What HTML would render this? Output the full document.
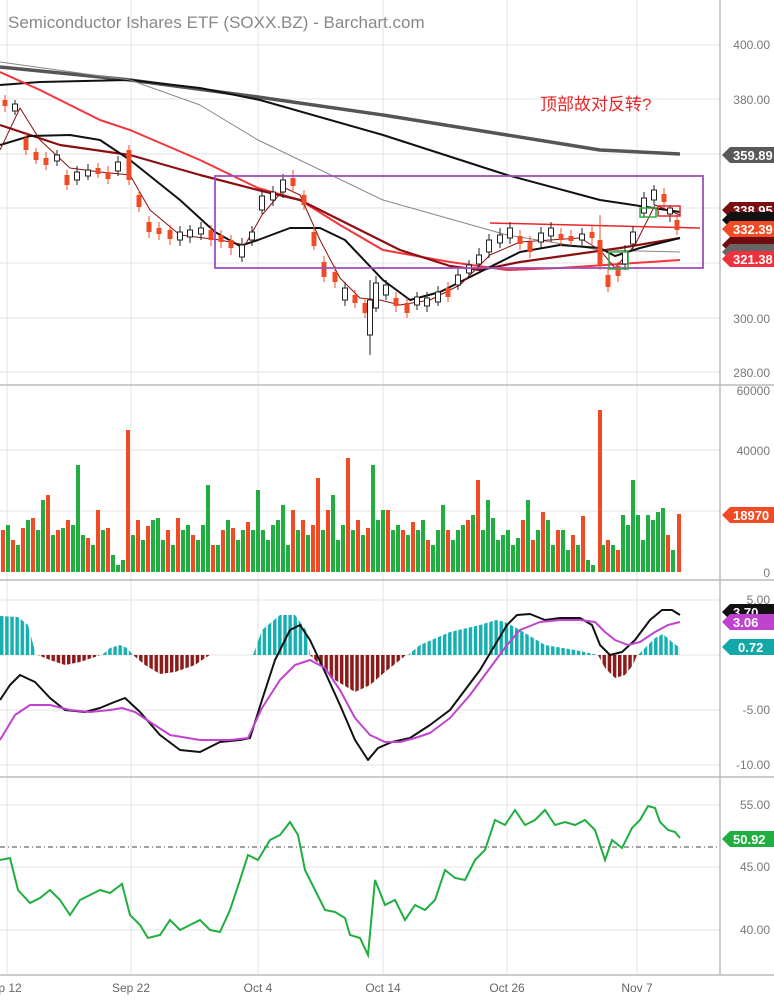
<!DOCTYPE html>
<html><head><meta charset="utf-8"><style>
html,body{margin:0;padding:0;background:#fff;}
svg{display:block;font-family:"Liberation Sans","Noto Sans CJK SC",sans-serif;}
</style></head><body>
<svg width="774" height="1000" viewBox="0 0 774 1000" xmlns="http://www.w3.org/2000/svg">
<defs>
<pattern id="pt" width="5.15" height="10" patternUnits="userSpaceOnUse"><rect width="3.5" height="10" fill="#17b0b0"/></pattern>
<pattern id="pr" width="5.15" height="10" patternUnits="userSpaceOnUse"><rect width="3.5" height="10" fill="#8b1a1a"/></pattern>
</defs>
<rect width="774" height="1000" fill="#fff"/>
<g stroke="#e3e3e3" stroke-width="1">
<line x1="7" y1="0" x2="7" y2="975"/><line x1="131" y1="0" x2="131" y2="975"/><line x1="258" y1="0" x2="258" y2="975"/><line x1="383" y1="0" x2="383" y2="975"/><line x1="507" y1="0" x2="507" y2="975"/><line x1="637" y1="0" x2="637" y2="975"/>
<line x1="0" y1="45" x2="720" y2="45"/><line x1="0" y1="99" x2="720" y2="99"/><line x1="0" y1="154" x2="720" y2="154"/><line x1="0" y1="208" x2="720" y2="208"/><line x1="0" y1="263" x2="720" y2="263"/><line x1="0" y1="318" x2="720" y2="318"/><line x1="0" y1="372" x2="720" y2="372"/>
<line x1="0" y1="450" x2="720" y2="450"/><line x1="0" y1="511" x2="720" y2="511"/>
<line x1="0" y1="600" x2="720" y2="600"/><line x1="0" y1="655" x2="720" y2="655"/><line x1="0" y1="710" x2="720" y2="710"/><line x1="0" y1="765" x2="720" y2="765"/>
<line x1="0" y1="805" x2="720" y2="805"/><line x1="0" y1="867" x2="720" y2="867"/><line x1="0" y1="930" x2="720" y2="930"/>
</g>
<g stroke="#bbb" stroke-width="1.5"><line x1="0" y1="385" x2="774" y2="385"/><line x1="0" y1="580" x2="774" y2="580"/><line x1="0" y1="777" x2="774" y2="777"/><line x1="0" y1="975" x2="774" y2="975"/><line x1="720" y1="0" x2="720" y2="975"/></g>
<text x="8" y="28" font-size="17" fill="#888">Semiconductor Ishares ETF (SOXX.BZ) - Barchart.com</text>
<text x="540" y="110" font-size="17" fill="#e8262a">顶部故对反转?</text>
<g font-size="12" fill="#777" text-anchor="end">
<text x="770" y="49">400.00</text><text x="770" y="104">380.00</text><text x="770" y="323">300.00</text><text x="770" y="377">280.00</text>
<text x="770" y="395">60000</text><text x="770" y="455">40000</text><text x="770" y="577">0</text>
<text x="770" y="604">5.00</text><text x="770" y="714">-5.00</text><text x="770" y="769">-10.00</text>
<text x="770" y="809">55.00</text><text x="770" y="871">45.00</text><text x="770" y="934">40.00</text>
</g>
<g font-size="12" fill="#666" text-anchor="middle">
<text x="10" y="992">p 12</text><text x="131" y="992">Sep 22</text><text x="258" y="992">Oct 4</text><text x="383" y="992">Oct 14</text><text x="507" y="992">Oct 26</text><text x="637" y="992">Nov 7</text>
</g>
<g fill="none" stroke-linejoin="round">
<polyline points="0,67 130,80 258,97 383,115 507,135 600,150 680,154" stroke="#555" stroke-width="3.5"/>
<polyline points="0,85 40,82 130,80 200,88 260,100 383,135 507,175 600,200 680,212" stroke="#111" stroke-width="2"/>
<polyline points="0,62 130,80 200,105 258,140 383,200 507,235 600,250 680,252" stroke="#888" stroke-width="1"/>
<polyline points="0,72 40,90 100,120 130,130 200,160 258,188 300,200 340,225 383,250 450,262 507,270 560,268 620,264 680,260" stroke="#f2353a" stroke-width="2"/>
<polyline points="0,125 60,145 130,155 200,175 258,190 300,200 350,225 400,250 450,266 480,270 520,262 570,255 620,248 680,238" stroke="#8b0e12" stroke-width="2.2"/>
<polyline points="0,145 30,136 70,135 100,140 130,160 180,200 215,232 240,246 258,240 290,228 320,228 345,240 383,280 410,300 440,292 480,272 520,252 560,245 600,248 615,256 640,248 680,238" stroke="#111" stroke-width="2"/>
<polyline points="0,150 20,108 40,140 70,168 100,172 130,175 150,210 180,235 220,240 245,245 262,215 285,188 300,195 320,240 340,278 360,298 380,300 400,305 430,300 460,285 490,255 520,242 550,240 580,238 600,250 615,268 635,245 655,205 680,215" stroke="#8b0e12" stroke-width="1"/>
<line x1="490" y1="223" x2="700" y2="228" stroke="#e8262a" stroke-width="1.5"/>
</g>
<g stroke-width="1">
<line x1="5" y1="95" x2="5" y2="112" stroke="#f04b25"/><rect x="2.5" y="100" width="5" height="6" fill="#f04b25"/>
<line x1="15" y1="100" x2="15" y2="115" stroke="#222"/><rect x="12.5" y="104" width="5" height="7" fill="#fff" stroke="#222"/>
<line x1="26" y1="132" x2="26" y2="155" stroke="#f04b25"/><rect x="23.5" y="138" width="5" height="12" fill="#f04b25"/>
<line x1="36" y1="148" x2="36" y2="164" stroke="#f04b25"/><rect x="33.5" y="152" width="5" height="8" fill="#f04b25"/>
<line x1="46" y1="152" x2="46" y2="170" stroke="#f04b25"/><rect x="43.5" y="158" width="5" height="7" fill="#f04b25"/>
<line x1="57" y1="150" x2="57" y2="166" stroke="#222"/><rect x="54.5" y="155" width="5" height="6" fill="#fff" stroke="#222"/>
<line x1="67" y1="170" x2="67" y2="190" stroke="#f04b25"/><rect x="64.5" y="175" width="5" height="10" fill="#f04b25"/>
<line x1="77" y1="166" x2="77" y2="185" stroke="#222"/><rect x="74.5" y="172" width="5" height="8" fill="#fff" stroke="#222"/>
<line x1="88" y1="164" x2="88" y2="180" stroke="#222"/><rect x="85.5" y="170" width="5" height="6" fill="#fff" stroke="#222"/>
<line x1="98" y1="163" x2="98" y2="178" stroke="#f04b25"/><rect x="95.5" y="168" width="5" height="6" fill="#f04b25"/>
<line x1="108" y1="166" x2="108" y2="184" stroke="#f04b25"/><rect x="105.5" y="172" width="5" height="7" fill="#f04b25"/>
<line x1="118" y1="156" x2="118" y2="176" stroke="#222"/><rect x="115.5" y="162" width="5" height="9" fill="#fff" stroke="#222"/>
<line x1="129" y1="145" x2="129" y2="185" stroke="#f04b25"/><rect x="126.5" y="150" width="5" height="30" fill="#f04b25"/>
<line x1="139" y1="190" x2="139" y2="212" stroke="#f04b25"/><rect x="136.5" y="195" width="5" height="12" fill="#f04b25"/>
<line x1="149" y1="216" x2="149" y2="238" stroke="#f04b25"/><rect x="146.5" y="222" width="5" height="10" fill="#f04b25"/>
<line x1="159" y1="222" x2="159" y2="240" stroke="#f04b25"/><rect x="156.5" y="228" width="5" height="6" fill="#f04b25"/>
<line x1="170" y1="225" x2="170" y2="245" stroke="#f04b25"/><rect x="167.5" y="230" width="5" height="9" fill="#f04b25"/>
<line x1="180" y1="226" x2="180" y2="246" stroke="#222"/><rect x="177.5" y="232" width="5" height="8" fill="#fff" stroke="#222"/>
<line x1="190" y1="225" x2="190" y2="243" stroke="#222"/><rect x="187.5" y="230" width="5" height="7" fill="#fff" stroke="#222"/>
<line x1="201" y1="222" x2="201" y2="240" stroke="#222"/><rect x="198.5" y="228" width="5" height="6" fill="#fff" stroke="#222"/>
<line x1="211" y1="225" x2="211" y2="246" stroke="#f04b25"/><rect x="208.5" y="230" width="5" height="10" fill="#f04b25"/>
<line x1="221" y1="230" x2="221" y2="248" stroke="#f04b25"/><rect x="218.5" y="235" width="5" height="7" fill="#f04b25"/>
<line x1="231" y1="235" x2="231" y2="255" stroke="#f04b25"/><rect x="228.5" y="240" width="5" height="8" fill="#f04b25"/>
<line x1="242" y1="238" x2="242" y2="262" stroke="#222"/><rect x="239.5" y="245" width="5" height="12" fill="#fff" stroke="#222"/>
<line x1="252" y1="226" x2="252" y2="246" stroke="#222"/><rect x="249.5" y="232" width="5" height="8" fill="#fff" stroke="#222"/>
<line x1="262" y1="190" x2="262" y2="214" stroke="#222"/><rect x="259.5" y="196" width="5" height="14" fill="#fff" stroke="#222"/>
<line x1="273" y1="186" x2="273" y2="206" stroke="#222"/><rect x="270.5" y="192" width="5" height="8" fill="#fff" stroke="#222"/>
<line x1="283" y1="174" x2="283" y2="198" stroke="#222"/><rect x="280.5" y="180" width="5" height="12" fill="#fff" stroke="#222"/>
<line x1="293" y1="170" x2="293" y2="192" stroke="#f04b25"/><rect x="290.5" y="178" width="5" height="8" fill="#f04b25"/>
<line x1="304" y1="190" x2="304" y2="210" stroke="#f04b25"/><rect x="301.5" y="195" width="5" height="10" fill="#f04b25"/>
<line x1="314" y1="226" x2="314" y2="250" stroke="#f04b25"/><rect x="311.5" y="232" width="5" height="14" fill="#f04b25"/>
<line x1="324" y1="256" x2="324" y2="282" stroke="#f04b25"/><rect x="321.5" y="262" width="5" height="15" fill="#f04b25"/>
<line x1="335" y1="266" x2="335" y2="288" stroke="#f04b25"/><rect x="332.5" y="272" width="5" height="10" fill="#f04b25"/>
<line x1="345" y1="282" x2="345" y2="306" stroke="#222"/><rect x="342.5" y="288" width="5" height="12" fill="#fff" stroke="#222"/>
<line x1="355" y1="290" x2="355" y2="308" stroke="#f04b25"/><rect x="352.5" y="295" width="5" height="8" fill="#f04b25"/>
<line x1="365" y1="298" x2="365" y2="318" stroke="#f04b25"/><rect x="362.5" y="303" width="5" height="10" fill="#f04b25"/>
<line x1="370" y1="280" x2="370" y2="355" stroke="#222"/><rect x="367.5" y="300" width="5" height="35" fill="#fff" stroke="#222"/>
<line x1="376" y1="276" x2="376" y2="312" stroke="#222"/><rect x="373.5" y="283" width="5" height="25" fill="#fff" stroke="#222"/>
<line x1="386" y1="280" x2="386" y2="300" stroke="#222"/><rect x="383.5" y="285" width="5" height="10" fill="#fff" stroke="#222"/>
<line x1="396" y1="292" x2="396" y2="312" stroke="#f04b25"/><rect x="393.5" y="298" width="5" height="8" fill="#f04b25"/>
<line x1="407" y1="298" x2="407" y2="318" stroke="#f04b25"/><rect x="404.5" y="303" width="5" height="10" fill="#f04b25"/>
<line x1="417" y1="292" x2="417" y2="310" stroke="#222"/><rect x="414.5" y="297" width="5" height="8" fill="#fff" stroke="#222"/>
<line x1="427" y1="292" x2="427" y2="312" stroke="#222"/><rect x="424.5" y="298" width="5" height="8" fill="#fff" stroke="#222"/>
<line x1="438" y1="286" x2="438" y2="306" stroke="#222"/><rect x="435.5" y="292" width="5" height="10" fill="#fff" stroke="#222"/>
<line x1="448" y1="282" x2="448" y2="302" stroke="#f04b25"/><rect x="445.5" y="288" width="5" height="9" fill="#f04b25"/>
<line x1="458" y1="268" x2="458" y2="290" stroke="#222"/><rect x="455.5" y="275" width="5" height="10" fill="#fff" stroke="#222"/>
<line x1="469" y1="260" x2="469" y2="278" stroke="#222"/><rect x="466.5" y="265" width="5" height="8" fill="#fff" stroke="#222"/>
<line x1="479" y1="248" x2="479" y2="270" stroke="#222"/><rect x="476.5" y="255" width="5" height="9" fill="#fff" stroke="#222"/>
<line x1="489" y1="234" x2="489" y2="258" stroke="#222"/><rect x="486.5" y="240" width="5" height="12" fill="#fff" stroke="#222"/>
<line x1="500" y1="228" x2="500" y2="248" stroke="#222"/><rect x="497.5" y="235" width="5" height="8" fill="#fff" stroke="#222"/>
<line x1="510" y1="222" x2="510" y2="244" stroke="#222"/><rect x="507.5" y="228" width="5" height="10" fill="#fff" stroke="#222"/>
<line x1="520" y1="230" x2="520" y2="250" stroke="#f04b25"/><rect x="517.5" y="236" width="5" height="8" fill="#f04b25"/>
<line x1="530" y1="236" x2="530" y2="258" stroke="#f04b25"/><rect x="527.5" y="242" width="5" height="10" fill="#f04b25"/>
<line x1="541" y1="227" x2="541" y2="248" stroke="#222"/><rect x="538.5" y="233" width="5" height="9" fill="#fff" stroke="#222"/>
<line x1="551" y1="222" x2="551" y2="242" stroke="#222"/><rect x="548.5" y="228" width="5" height="8" fill="#fff" stroke="#222"/>
<line x1="561" y1="228" x2="561" y2="246" stroke="#f04b25"/><rect x="558.5" y="234" width="5" height="6" fill="#f04b25"/>
<line x1="571" y1="230" x2="571" y2="246" stroke="#f04b25"/><rect x="568.5" y="236" width="5" height="5" fill="#f04b25"/>
<line x1="582" y1="228" x2="582" y2="246" stroke="#222"/><rect x="579.5" y="234" width="5" height="6" fill="#fff" stroke="#222"/>
<line x1="592" y1="225" x2="592" y2="244" stroke="#f04b25"/><rect x="589.5" y="232" width="5" height="6" fill="#f04b25"/>
<line x1="600" y1="215" x2="600" y2="270" stroke="#f04b25"/><rect x="597.5" y="240" width="5" height="25" fill="#f04b25"/>
<line x1="608" y1="268" x2="608" y2="292" stroke="#f04b25"/><rect x="605.5" y="275" width="5" height="12" fill="#f04b25"/>
<line x1="618" y1="262" x2="618" y2="282" stroke="#f04b25"/><rect x="615.5" y="266" width="5" height="10" fill="#f04b25"/>
<line x1="625" y1="245" x2="625" y2="270" stroke="#222"/><rect x="622.5" y="252" width="5" height="12" fill="#fff" stroke="#222"/>
<line x1="633" y1="226" x2="633" y2="250" stroke="#222"/><rect x="630.5" y="232" width="5" height="12" fill="#fff" stroke="#222"/>
<line x1="644" y1="192" x2="644" y2="218" stroke="#222"/><rect x="641.5" y="198" width="5" height="15" fill="#fff" stroke="#222"/>
<line x1="654" y1="185" x2="654" y2="205" stroke="#222"/><rect x="651.5" y="190" width="5" height="10" fill="#fff" stroke="#222"/>
<line x1="664" y1="188" x2="664" y2="208" stroke="#f04b25"/><rect x="661.5" y="194" width="5" height="8" fill="#f04b25"/>
<line x1="670" y1="205" x2="670" y2="222" stroke="#222"/><rect x="667.5" y="208" width="5" height="6" fill="#fff" stroke="#222"/>
<line x1="677" y1="215" x2="677" y2="235" stroke="#f04b25"/><rect x="674.5" y="220" width="5" height="10" fill="#f04b25"/>
</g>
<rect x="215" y="176" width="488" height="92" fill="none" stroke="#9c4fc2" stroke-width="1.8"/>
<rect x="640" y="208" width="16" height="9" fill="none" stroke="#2bab3f" stroke-width="1.5"/>
<rect x="658" y="206" width="22" height="10" fill="none" stroke="#e8262a" stroke-width="1.5"/>
<rect x="609" y="252" width="19" height="17" fill="none" stroke="#2bab3f" stroke-width="1.5"/>
<g>
<path fill="#f04b25" d="M1,530h4v42h-4z M11,540h4v32h-4z M21,528h4v44h-4z M31,518h4v54h-4z M46,495h4v77h-4z M56,530h4v42h-4z M66,520h4v52h-4z M86,538h4v34h-4z M96,510h4v62h-4z M106,528h4v44h-4z M126,430h4v142h-4z M136,520h4v52h-4z M146,526h4v46h-4z M166,530h4v42h-4z M176,518h4v54h-4z M191,535h4v37h-4z M211,545h4v27h-4z M221,530h4v42h-4z M231,528h4v44h-4z M246,522h4v50h-4z M291,510h4v62h-4z M301,520h4v52h-4z M311,525h4v47h-4z M316,478h4v94h-4z M326,510h4v62h-4z M346,458h4v114h-4z M356,520h4v52h-4z M366,528h4v44h-4z M386,510h4v62h-4z M401,530h4v42h-4z M411,522h4v50h-4z M426,540h4v32h-4z M446,530h4v42h-4z M466,520h4v52h-4z M476,480h4v92h-4z M521,520h4v52h-4z M531,540h4v32h-4z M541,512h4v60h-4z M556,530h4v42h-4z M571,535h4v37h-4z M581,516h4v56h-4z M598,410h4v162h-4z M606,540h4v32h-4z M616,550h4v22h-4z M666,535h4v37h-4z M677,514h4v58h-4z"/>
<path fill="#1fae3f" d="M6,525h4v47h-4z M16,545h4v27h-4z M26,520h4v52h-4z M36,530h4v42h-4z M41,500h4v72h-4z M51,535h4v37h-4z M61,528h4v44h-4z M71,525h4v47h-4z M76,465h4v107h-4z M81,535h4v37h-4z M91,545h4v27h-4z M101,530h4v42h-4z M111,555h4v17h-4z M116,565h4v7h-4z M121,560h4v12h-4z M131,535h4v37h-4z M141,540h4v32h-4z M151,520h4v52h-4z M156,518h4v54h-4z M161,540h4v32h-4z M171,545h4v27h-4z M181,530h4v42h-4z M186,525h4v47h-4z M196,540h4v32h-4z M201,525h4v47h-4z M206,485h4v87h-4z M216,545h4v27h-4z M226,520h4v52h-4z M236,540h4v32h-4z M241,530h4v42h-4z M251,530h4v42h-4z M256,490h4v82h-4z M261,530h4v42h-4z M266,540h4v32h-4z M271,525h4v47h-4z M276,520h4v52h-4z M281,505h4v67h-4z M286,545h4v27h-4z M296,530h4v42h-4z M306,535h4v37h-4z M321,530h4v42h-4z M331,495h4v77h-4z M336,540h4v32h-4z M341,525h4v47h-4z M351,530h4v42h-4z M361,535h4v37h-4z M371,465h4v107h-4z M376,520h4v52h-4z M381,510h4v62h-4z M391,530h4v42h-4z M396,525h4v47h-4z M406,535h4v37h-4z M416,530h4v42h-4z M421,520h4v52h-4z M431,545h4v27h-4z M436,530h4v42h-4z M441,505h4v67h-4z M451,540h4v32h-4z M456,530h4v42h-4z M461,525h4v47h-4z M471,515h4v57h-4z M481,530h4v42h-4z M486,500h4v72h-4z M491,518h4v54h-4z M496,540h4v32h-4z M501,535h4v37h-4z M506,530h4v42h-4z M511,545h4v27h-4z M516,538h4v34h-4z M526,500h4v72h-4z M536,530h4v42h-4z M546,520h4v52h-4z M551,545h4v27h-4z M561,530h4v42h-4z M566,550h4v22h-4z M576,545h4v27h-4z M586,560h4v12h-4z M591,565h4v7h-4z M601,545h4v27h-4z M611,545h4v27h-4z M621,515h4v57h-4z M626,525h4v47h-4z M631,480h4v92h-4z M636,515h4v57h-4z M641,540h4v32h-4z M646,515h4v57h-4z M651,520h4v52h-4z M656,512h4v60h-4z M661,508h4v64h-4z M671,550h4v22h-4z"/>
</g>
<path fill="url(#pt)" d="M0,655 L0,616 18,617 28,625 36,655Z M102,655 L110,648 120,645 127,648 133,655Z M253,655 L262,630 280,615 295,615 306,630 310,655Z M408,655 L420,645 450,632 480,625 496,620 505,622 520,630 545,645 575,650 598,655Z M638,655 L645,648 655,638 663,634 672,642 680,648 680,655Z"/>
<path fill="url(#pr)" d="M38,655 L50,660 65,665 80,662 95,657 100,655Z M133,655 L145,665 160,674 175,672 195,665 205,658 210,655Z M310,655 L320,665 335,680 355,692 370,685 385,672 400,660 406,655Z M598,655 L605,668 615,678 625,675 633,665 637,655Z"/>
<g fill="none" stroke-linejoin="round">
<polyline points="0,700 10,685 20,675 35,682 50,698 65,710 85,712 100,708 112,703 125,698 140,712 160,735 180,750 200,752 220,742 240,740 250,738 262,700 275,660 290,630 300,625 310,640 325,672 340,705 355,740 368,760 378,748 392,742 410,738 430,725 450,710 465,690 480,670 495,645 507,625 517,615 530,614 545,620 560,618 580,618 592,625 600,645 610,655 622,652 635,640 650,620 662,610 672,610 680,615" stroke="#111" stroke-width="2"/>
<polyline points="0,740 15,715 30,705 50,705 70,710 90,712 110,710 122,708 135,712 150,722 170,735 200,740 230,740 248,738 262,708 280,680 295,665 310,660 325,668 340,690 355,718 370,735 385,742 400,742 415,738 430,733 450,718 470,695 490,668 507,645 520,630 540,622 560,620 580,620 595,622 605,632 615,640 628,645 640,642 655,632 668,625 680,622" stroke="#c043cf" stroke-width="2"/>
</g>
<line x1="0" y1="847" x2="720" y2="847" stroke="#444" stroke-dasharray="5,3,1,3" stroke-width="1"/>
<path d="M0,860 L10,858 18,890 30,903 40,898 50,890 60,900 70,915 80,900 90,895 100,890 110,893 122,884 130,915 140,925 148,938 160,935 170,920 180,930 190,925 200,920 210,930 220,932 230,910 240,880 248,855 258,860 270,840 280,835 290,822 298,835 305,870 315,890 325,910 335,912 345,918 350,935 360,938 368,955 375,880 385,905 395,900 405,920 415,905 425,910 435,900 445,870 455,878 465,880 475,860 485,850 495,820 505,825 515,810 525,825 535,820 545,810 555,825 565,822 575,825 585,820 595,830 605,860 612,840 622,848 632,828 640,820 648,806 655,808 660,822 668,830 675,832 680,838" fill="none" stroke="#1fae3f" stroke-width="2"/>
<g font-size="13" font-weight="bold" fill="#fff">
<path d="M722,155 L730,147 H774 V163 H730 Z" fill="#595959"/><text x="733" y="160">359.89</text>
<path d="M722,210 L730,202 H774 V218 H730 Z" fill="#7a0f12"/><text x="733" y="215">338.95</text>
<path d="M722,220 L730,212 H774 V228 H730 Z" fill="#111"/>
<path d="M722,245 L730,237 H774 V253 H730 Z" fill="#6f0b0e"/>
<path d="M722,252 L730,244 H774 V260 H730 Z" fill="#666"/>
<path d="M722,229 L730,221 H774 V237 H730 Z" fill="#f04b25"/><text x="733" y="234">332.39</text>
<path d="M722,259 L730,251 H774 V267 H730 Z" fill="#f0303c"/><text x="733" y="264">321.38</text>
<path d="M722,515 L730,507 H774 V523 H730 Z" fill="#f04b25"/><text x="733" y="520">18970</text>
<path d="M722,612 L730,604 H774 V620 H730 Z" fill="#111"/><text x="733" y="617">3.70</text>
<path d="M722,622 L730,614 H774 V630 H730 Z" fill="#c043cf"/><text x="733" y="627">3.06</text>
<path d="M722,647 L730,639 H774 V655 H730 Z" fill="#12a8a8"/><text x="738" y="652">0.72</text>
<path d="M722,839 L730,831 H774 V847 H730 Z" fill="#1fae3f"/><text x="733" y="844">50.92</text>
</g>
</svg>
</body></html>
